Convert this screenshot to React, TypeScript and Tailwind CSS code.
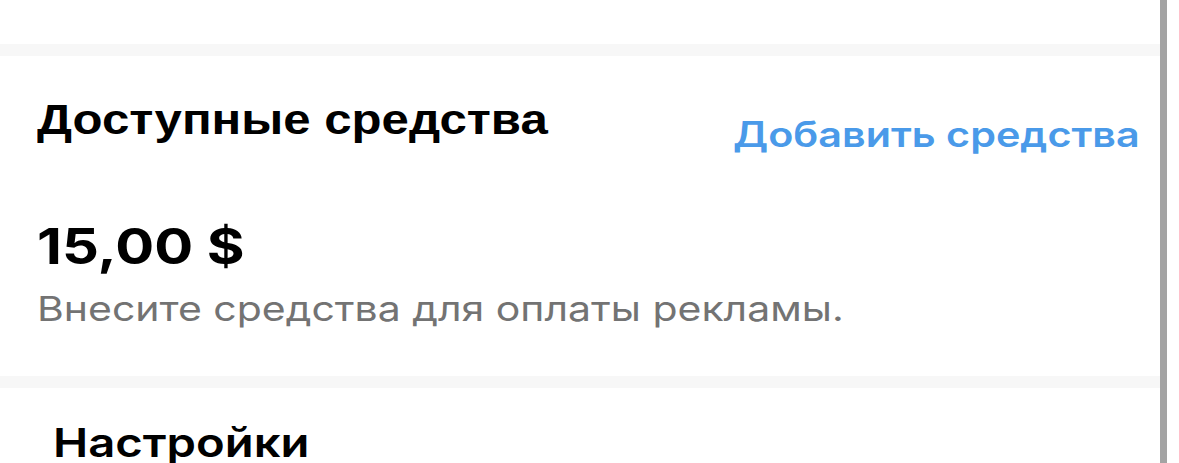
export default function App() {
  return (
    <div
      className="flex h-[463px] w-full overflow-hidden bg-white"
      style={{ fontFamily: 'Inter, "Noto Sans", sans-serif' }}
    >
      <div className="flex flex-1 flex-col">
        <div className="h-[44px] shrink-0" />
        <div className="h-[12px] shrink-0 bg-[#f7f7f7]" />

        {/* Balance */}
        <section className="shrink-0 pl-[37px] pr-[20px]">
          <div className="flex items-start justify-between pt-[40px]">
            <h2 className="origin-left scale-x-[1.17] font-['Liberation_Sans',Arial,sans-serif] text-[42px] font-bold leading-[48px] text-black">
              Доступные средства
            </h2>
            <button className="mt-[17px] origin-right scale-x-[1.18] text-[35px] font-semibold leading-[42px] text-[#4a9ae9]">
              Добавить средства
            </button>
          </div>
          <div className="origin-left scale-x-[1.18] pt-[65px] text-[49px] font-bold leading-[54px] text-black">
            15,00 $
          </div>
          <p className="origin-left scale-x-[1.205] pt-[15px] text-[34px] leading-[40px] text-[#737373]">
            Внесите средства для оплаты рекламы.
          </p>
        </section>

        <div className="mt-[47px] h-[12px] shrink-0 bg-[#f7f7f7]" />

        <section className="shrink-0 pl-[53px] pt-[31px]">
          <h2 className="origin-left scale-x-[1.18] text-[40px] font-semibold leading-[48px] text-black">
            Настройки
          </h2>
        </section>
      </div>
      <div className="w-[7px] shrink-0 bg-[#a3a3a3]" />
      <div className="w-[12px] shrink-0" />
    </div>
  );
}
